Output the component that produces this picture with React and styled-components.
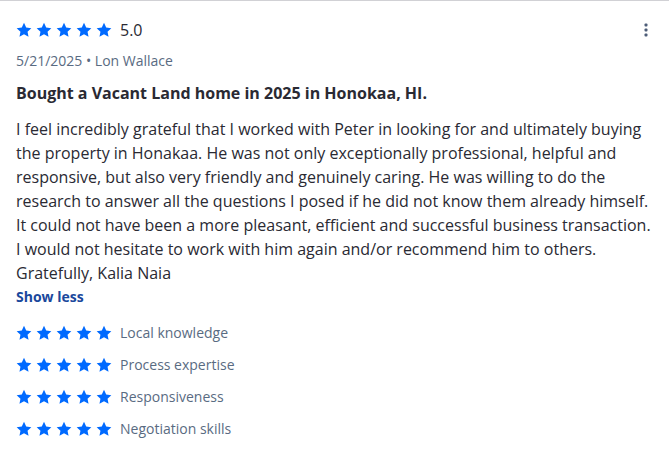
import React from 'react'
import styled, { createGlobalStyle } from 'styled-components'

const GlobalStyle = createGlobalStyle`
  body {
    margin: 0;
    background: #ffffff;
    font-family: "Open Sans", "Liberation Sans", sans-serif;
  }
`

const Card = styled.article`
  box-sizing: border-box;
  width: 669px;
  min-height: 462px;
  border-top: 1px solid #d1d1d5;
  padding: 14px 16px 16px 16px;
  color: #2a2a33;
`

const TopRow = styled.div`
  display: flex;
  align-items: center;
  justify-content: space-between;
  height: 30px;
`

const RatingGroup = styled.div`
  display: flex;
  align-items: center;
  gap: 8px;
`

const Stars = styled.div`
  display: flex;
  gap: 4px;
`

const Score = styled.span`
  font-size: 16px;
  line-height: 24px;
  color: #2a2a33;
`

const MenuButton = styled.button`
  border: none;
  background: transparent;
  padding: 0;
  width: 24px;
  height: 24px;
  display: flex;
  align-items: center;
  justify-content: center;
  margin-right: -5px;
  cursor: pointer;
`

const Meta = styled.div`
  margin-top: 6px;
  font-size: 14px;
  line-height: 20px;
  color: #596b82;
`

const Title = styled.h3`
  margin: 10px 0 0 0;
  font-size: 16px;
  line-height: 24px;
  font-weight: 700;
  color: #2a2a33;
`

const Body = styled.p`
  margin: 12px 0 0 0;
  font-size: 16px;
  line-height: 24px;
  color: #2a2a33;
  white-space: pre-line;
`

const ShowLess = styled.button`
  border: none;
  background: transparent;
  padding: 0;
  font-family: inherit;
  font-size: 14px;
  line-height: 20px;
  font-weight: 700;
  color: #1a489c;
  cursor: pointer;
`

const Categories = styled.ul`
  list-style: none;
  margin: 14px 0 0 0;
  padding: 0;
  display: flex;
  flex-direction: column;
  gap: 8px;
`

const CategoryRow = styled.li`
  display: flex;
  align-items: center;
  gap: 8px;
  height: 24px;
`

const CategoryLabel = styled.span`
  font-size: 14px;
  line-height: 20px;
  color: #596b82;
`

const Star = () => (
  <svg width="16" height="16" viewBox="0 0 24 24" aria-hidden="true">
    <path
      fill="#006aff"
      d="M12 1.2l3.3 7.1 7.7.9-5.7 5.3 1.5 7.7L12 18.4l-6.8 3.8 1.5-7.7L1 9.2l7.7-.9z"
    />
  </svg>
)

const FiveStars = () => (
  <Stars>
    {[0, 1, 2, 3, 4].map(i => <Star key={i} />)}
  </Stars>
)

const Kebab = () => (
  <svg width="4" height="14" viewBox="0 0 4 14" aria-hidden="true">
    <rect x="0.5" y="0.5" width="3" height="3" rx="1" fill="#4d5d78" />
    <rect x="0.5" y="5.5" width="3" height="3" rx="1" fill="#4d5d78" />
    <rect x="0.5" y="10.5" width="3" height="3" rx="1" fill="#4d5d78" />
  </svg>
)

const reviewText = `I feel incredibly grateful that I worked with Peter in looking for and ultimately buying
the property in Honakaa. He was not only exceptionally professional, helpful and
responsive, but also very friendly and genuinely caring. He was willing to do the
research to answer all the questions I posed if he did not know them already himself.
It could not have been a more pleasant, efficient and successful business transaction.
I would not hesitate to work with him again and/or recommend him to others.
Gratefully, Kalia Naia`

const categories = ['Local knowledge', 'Process expertise', 'Responsiveness', 'Negotiation skills']

const App = () => {
  return (
    <>
      <GlobalStyle />
      <Card>
        <TopRow>
          <RatingGroup>
            <FiveStars />
            <Score>5.0</Score>
          </RatingGroup>
          <MenuButton aria-label="More options">
            <Kebab />
          </MenuButton>
        </TopRow>
        <Meta>5/21/2025 • Lon Wallace</Meta>
        <Title>Bought a Vacant Land home in 2025 in Honokaa, HI.</Title>
        <Body>{reviewText}</Body>
        <ShowLess>Show less</ShowLess>
        <Categories>
          {categories.map(c => (
            <CategoryRow key={c}>
              <FiveStars />
              <CategoryLabel>{c}</CategoryLabel>
            </CategoryRow>
          ))}
        </Categories>
      </Card>
    </>
  )
}

export default App
